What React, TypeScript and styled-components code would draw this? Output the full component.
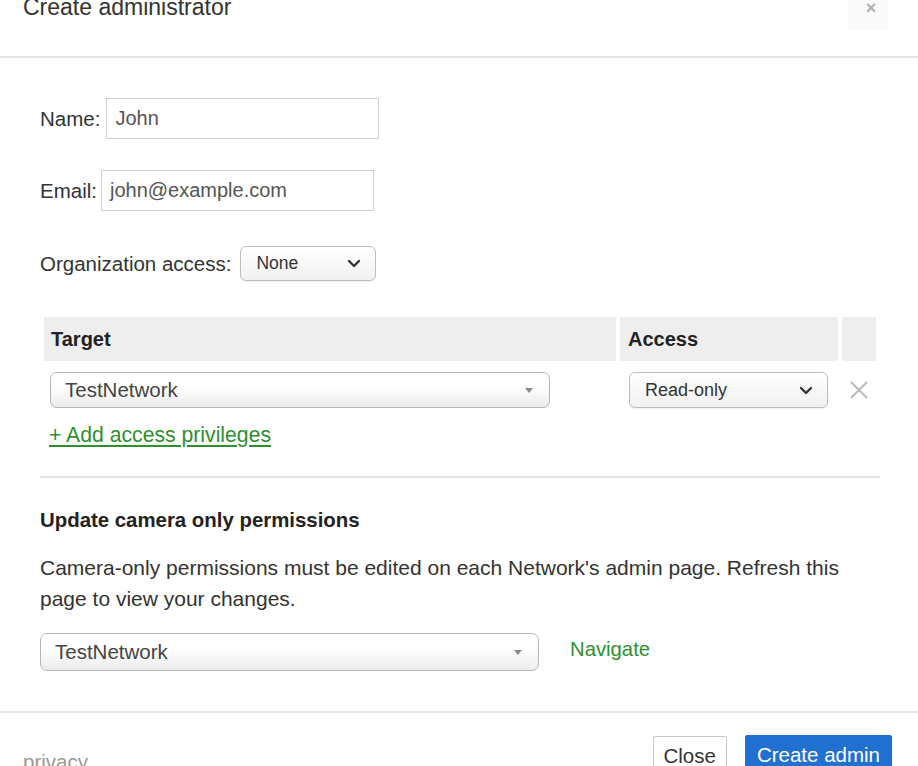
import styled, { createGlobalStyle } from 'styled-components'

const GlobalStyle = createGlobalStyle`
  html, body {
    margin: 0;
    padding: 0;
    background: #fff;
    overflow: hidden;
  }
  body {
    font-family: 'Liberation Sans', Arial, sans-serif;
    color: #333;
  }
`

const Dialog = styled.div`
  width: 918px;
  height: 766px;
  display: flex;
  flex-direction: column;
  overflow: hidden;
`

const Header = styled.div`
  height: 56px;
  flex-shrink: 0;
  border-bottom: 2px solid #e6e6e6;
  padding: 0 30px 0 23px;
  display: flex;
  justify-content: space-between;
  align-items: flex-start;
`

const Title = styled.h3`
  margin: -8px 0 0;
  font-size: 23px;
  line-height: 30px;
  font-weight: normal;
  color: #333;
`

const CloseX = styled.div`
  box-sizing: border-box;
  width: 40px;
  height: 30px;
  padding-left: 6px;
  background: #fafafa;
  color: #b0b0b0;
  font-size: 18px;
  font-weight: bold;
  line-height: 16px;
  text-align: center;
`

const Body = styled.div`
  flex: 1;
  padding: 40px 40px 0;
`

const FieldRow = styled.div<{ $mb: number; $gap?: number }>`
  display: flex;
  align-items: center;
  gap: ${(p) => p.$gap ?? 6}px;
  margin-bottom: ${(p) => p.$mb}px;
`

const Label = styled.label`
  font-size: 20.5px;
  color: #333;
`

const TextInput = styled.div<{ $w: number }>`
  box-sizing: border-box;
  width: ${(p) => p.$w}px;
  height: 41px;
  border: 1.5px solid #cfcfcf;
  padding: 0 8px;
  display: flex;
  align-items: center;
  font-size: 20px;
  color: #555;
`

const SmallSelect = styled.div<{ $w: number; $h?: number; $fs?: number }>`
  box-sizing: border-box;
  width: ${(p) => p.$w}px;
  height: ${(p) => p.$h ?? 35}px;
  border: 1.5px solid #bdbdbd;
  border-radius: 6px;
  background: linear-gradient(#ffffff, #f1f1f1);
  padding: 0 14px 0 15px;
  display: flex;
  align-items: center;
  justify-content: space-between;
  font-size: ${(p) => p.$fs ?? 17.5}px;
  color: #333;
  box-shadow: 0 1px 1px rgba(0, 0, 0, 0.06);
`

const BigSelect = styled.div<{ $w: number; $h: number }>`
  box-sizing: border-box;
  width: ${(p) => p.$w}px;
  height: ${(p) => p.$h}px;
  border: 1.5px solid #b5b5b5;
  border-radius: 7px;
  background: linear-gradient(#ffffff 40%, #ececec);
  padding: 0 15px 0 14px;
  display: flex;
  align-items: center;
  justify-content: space-between;
  font-size: 20.5px;
  color: #444;
`

const Grid = styled.div`
  display: grid;
  grid-template-columns: 572px 218px 34px;
  column-gap: 4px;
  margin-left: 4px;
`

const HeadCell = styled.div<{ $pl?: number }>`
  height: 44px;
  background: #eeeeee;
  display: flex;
  align-items: center;
  padding-left: ${(p) => p.$pl ?? 7}px;
  font-size: 20px;
  font-weight: bold;
  color: #222;
`

const Cell = styled.div<{ $pl: number }>`
  padding: 11px 0 0 ${(p) => p.$pl}px;
  display: flex;
  align-items: center;
`

const RemoveCell = styled.div`
  padding-top: 11px;
  height: 36px;
  display: flex;
  align-items: center;
  justify-content: center;
`

const AddLink = styled.a`
  display: inline-block;
  margin: 15px 0 0 9px;
  font-size: 21.2px;
  line-height: 24px;
  color: #2f8f2f;
  text-decoration: underline;
  text-underline-offset: 3px;
`

const Divider = styled.hr`
  margin: 29px -2px 0 0;
  border: 0;
  height: 2px;
  background: #e4e4e4;
`

const SectionTitle = styled.h4`
  margin: 30px 0 0;
  font-size: 20.4px;
  line-height: 24px;
  font-weight: bold;
  color: #222;
`

const Paragraph = styled.p`
  margin: 20px 0 0;
  font-size: 21px;
  line-height: 31px;
  color: #333;
  max-width: 835px;
`

const NavRow = styled.div`
  display: flex;
  align-items: center;
  gap: 31px;
  margin-top: 19px;
`

const NavLink = styled.a`
  font-size: 20.3px;
  color: #2f8f2f;
  margin-top: -6px;
`

const Footer = styled.div`
  box-sizing: border-box;
  height: 55px;
  flex-shrink: 0;
  border-top: 2px solid #e6e6e6;
  padding: 23px 26px 0 23px;
  display: flex;
  justify-content: space-between;
  align-items: flex-start;
`

const Privacy = styled.span`
  margin-top: 14px;
  font-size: 20.5px;
  line-height: 24px;
  color: #999;
`

const Buttons = styled.div`
  display: flex;
  gap: 18px;
`

const Button = styled.button<{ $primary?: boolean }>`
  flex-shrink: 0;
  height: 40px;
  padding: 0 ${(p) => (p.$primary ? 11 : 10)}px;
  border-radius: 2px;
  font-family: inherit;
  font-size: 20.5px;
  border: 1.5px solid ${(p) => (p.$primary ? '#1e6fce' : '#c8c8c8')};
  background: ${(p) => (p.$primary ? '#1f70d0' : '#fff')};
  color: ${(p) => (p.$primary ? '#fff' : '#333')};
  margin-top: ${(p) => (p.$primary ? '-1px' : '0')};
`

const Chevron = () => (
  <svg width="14" height="9" viewBox="0 0 14 9">
    <path d="M2 2 L7 7 L12 2" fill="none" stroke="#333" strokeWidth="2.4" strokeLinecap="round" strokeLinejoin="round" />
  </svg>
)

const Caret = () => (
  <svg width="10" height="7" viewBox="0 0 10 7">
    <path d="M1 1 H9 L5 6 Z" fill="#8a8a8a" />
  </svg>
)

const RemoveIcon = () => (
  <svg width="20" height="20" viewBox="0 0 20 20">
    <path d="M2 2 L18 18 M18 2 L2 18" stroke="#bdbdbd" strokeWidth="2.2" />
  </svg>
)

export default function App() {
  return (
    <>
      <GlobalStyle />
      <Dialog>
        <Header>
          <Title>Create administrator</Title>
          <CloseX>×</CloseX>
        </Header>
        <Body>
          <FieldRow $mb={31}>
            <Label>Name:</Label>
            <TextInput $w={273}>John</TextInput>
          </FieldRow>
          <FieldRow $mb={35} $gap={4}>
            <Label>Email:</Label>
            <TextInput $w={273}>john@example.com</TextInput>
          </FieldRow>
          <FieldRow $mb={36} $gap={9}>
            <Label>Organization access:</Label>
            <SmallSelect $w={136}>
              None
              <Chevron />
            </SmallSelect>
          </FieldRow>

          <Grid>
            <HeadCell>Target</HeadCell>
            <HeadCell $pl={8}>Access</HeadCell>
            <HeadCell />
            <Cell $pl={6}>
              <BigSelect $w={500} $h={36}>
                TestNetwork
                <Caret />
              </BigSelect>
            </Cell>
            <Cell $pl={9}>
              <SmallSelect $w={199} $h={36} $fs={18}>
                Read-only
                <Chevron />
              </SmallSelect>
            </Cell>
            <RemoveCell>
              <RemoveIcon />
            </RemoveCell>
          </Grid>
          <AddLink>+ Add access privileges</AddLink>

          <Divider />

          <SectionTitle>Update camera only permissions</SectionTitle>
          <Paragraph>
            Camera-only permissions must be edited on each Network's admin page. Refresh this page to view your changes.
          </Paragraph>
          <NavRow>
            <BigSelect $w={499} $h={38}>
              TestNetwork
              <Caret />
            </BigSelect>
            <NavLink>Navigate</NavLink>
          </NavRow>
        </Body>
        <Footer>
          <Privacy>privacy</Privacy>
          <Buttons>
            <Button>Close</Button>
            <Button $primary>Create admin</Button>
          </Buttons>
        </Footer>
      </Dialog>
    </>
  )
}
